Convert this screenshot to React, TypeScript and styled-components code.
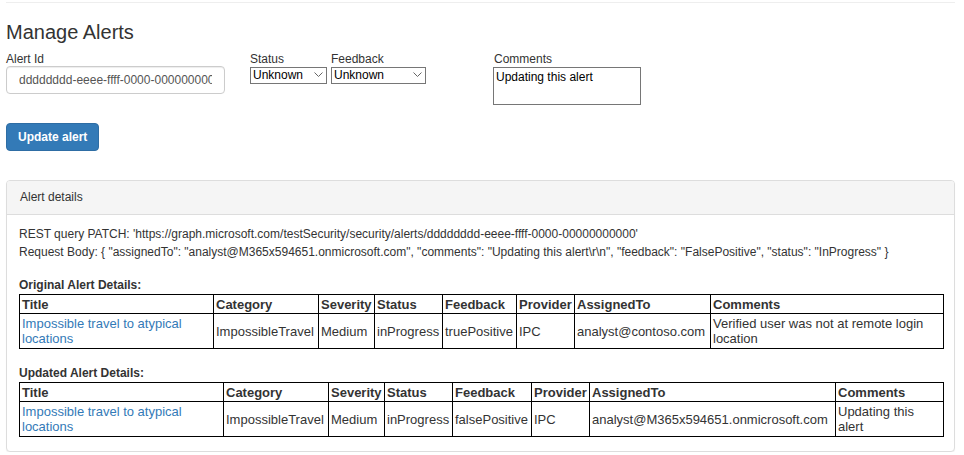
import React from "react";
import styled, { createGlobalStyle } from "styled-components";

const Global = createGlobalStyle`
  html, body { margin: 0; padding: 0; background: #fff; }
  body { font-family: "Liberation Sans", Arial, sans-serif; font-size: 12px; color: #333; line-height: 1.42857; }
  * { box-sizing: border-box; }
`;

const Page = styled.div`
  margin-left: 6px;
  width: 949px;
`;

const Rule = styled.hr`
  margin: 2px 0 0 0;
  border: 0;
  border-top: 1px solid #eee;
  height: 0;
`;

const Title = styled.h2`
  margin: 17px 0 0 0;
  font-size: 20px;
  font-weight: 400;
  line-height: 24px;
  color: #333;
`;

const FormRow = styled.div`
  display: flex;
  align-items: flex-start;
  margin-top: 8px;
`;

const Field = styled.div<{ $w: number; $ml?: number }>`
  display: flex;
  flex-direction: column;
  width: ${(p) => p.$w}px;
  margin-left: ${(p) => p.$ml ?? 0}px;
`;

const Label = styled.label`
  font-size: 12px;
  line-height: 14px;
  color: #333;
  height: 14px;
`;

const TextInput = styled.input`
  width: 219px;
  height: 28px;
  padding: 0 12px;
  border: 1px solid #ccc;
  border-radius: 4px;
  font-family: "Liberation Sans", Arial, sans-serif;
  font-size: 12px;
  color: #555;
  box-shadow: inset 0 1px 1px rgba(0, 0, 0, 0.075);
  outline: none;
`;

const SelectWrap = styled.div<{ $w: number }>`
  position: relative;
  width: ${(p) => p.$w}px;
  height: 17px;
  margin-top: 1px;
`;

const Select = styled.select`
  appearance: none;
  -webkit-appearance: none;
  width: 100%;
  height: 17px;
  border: 1px solid #767676;
  border-radius: 0;
  background: #fff;
  padding: 0 0 0 2px;
  font-family: "Liberation Sans", Arial, sans-serif;
  font-size: 12px;
  line-height: 15px;
  color: #000;
  outline: none;
`;

const Chevron = styled.svg`
  position: absolute;
  right: 4px;
  top: 5px;
  pointer-events: none;
`;

const TextArea = styled.textarea`
  width: 148px;
  height: 38px;
  margin-top: 1px;
  border: 1px solid #767676;
  border-radius: 0;
  padding: 2px 2px;
  margin-left: -1px;
  font-family: "Liberation Sans", Arial, sans-serif;
  font-size: 12px;
  line-height: 14px;
  color: #000;
  resize: none;
  outline: none;
`;

const Button = styled.button`
  margin-top: 18px;
  height: 28px;
  padding: 0 11px;
  background: #337ab7;
  border: 1px solid #2e6da4;
  border-radius: 4px;
  color: #fff;
  font-family: "Liberation Sans", Arial, sans-serif;
  font-size: 12px;
  font-weight: 700;
  cursor: pointer;
`;

const Panel = styled.div`
  margin-top: 29px;
  border: 1px solid #ddd;
  border-radius: 4px;
  box-shadow: 0 1px 1px rgba(0, 0, 0, 0.05);
  background: #fff;
`;

const PanelHeading = styled.div`
  height: 34px;
  padding: 0 13px;
  background: #f5f5f5;
  border-bottom: 1px solid #ddd;
  border-radius: 3px 3px 0 0;
  display: flex;
  align-items: center;
  font-size: 12px;
  color: #333;
`;

const PanelBody = styled.div`
  padding: 10px 11px 14px 12px;
`;

const Line = styled.div`
  line-height: 18px;
  font-size: 12px;
  white-space: nowrap;
`;

const Spacer = styled.div`
  height: 16px;
`;

const SectionLabel = styled.div`
  font-weight: 700;
  font-size: 12px;
  line-height: 17px;
`;

const Table = styled.table`
  width: 924px;
  table-layout: fixed;
  border-collapse: collapse;
  font-family: "Liberation Sans", Arial, sans-serif;
  font-size: 13px;
  line-height: 15px;
  color: #333;
`;

const Th = styled.th`
  border: 1px solid #000;
  padding: 2px 2px 1px 2px;
  text-align: left;
  font-weight: 700;
  white-space: nowrap;
  overflow: hidden;
`;

const Td = styled.td`
  border: 1px solid #000;
  padding: 2px 2px;
  vertical-align: middle;
`;

const Link = styled.a`
  color: #337ab7;
  text-decoration: none;
`;

const headers = ["Title", "Category", "Severity", "Status", "Feedback", "Provider", "AssignedTo", "Comments"];

type Row = {
  title: string;
  category: string;
  severity: string;
  status: string;
  feedback: string;
  provider: string;
  assigned: string;
  comments: string;
};

function AlertTable({ widths, row }: { widths: number[]; row: Row }) {
  return (
    <Table>
      <colgroup>
        {widths.map((w, i) => (
          <col key={i} style={{ width: w }} />
        ))}
      </colgroup>
      <thead>
        <tr>
          {headers.map((h) => (
            <Th key={h}>{h}</Th>
          ))}
        </tr>
      </thead>
      <tbody>
        <tr>
          <Td>
            <Link href="#">{row.title}</Link>
          </Td>
          <Td>{row.category}</Td>
          <Td>{row.severity}</Td>
          <Td>{row.status}</Td>
          <Td>{row.feedback}</Td>
          <Td>{row.provider}</Td>
          <Td>{row.assigned}</Td>
          <Td>{row.comments}</Td>
        </tr>
      </tbody>
    </Table>
  );
}

function Dropdown({ w }: { w: number }) {
  return (
    <SelectWrap $w={w}>
      <Select defaultValue="Unknown">
        <option>Unknown</option>
        <option>True Positive</option>
        <option>False Positive</option>
      </Select>
      <Chevron width="9" height="6" viewBox="0 0 9 6">
        <polyline points="0.5,0.5 4.5,4.5 8.5,0.5" fill="none" stroke="#666" strokeWidth="1" />
      </Chevron>
    </SelectWrap>
  );
}

export default function App() {
  return (
    <>
      <Global />
      <Page>
        <Rule />
        <Title>Manage Alerts</Title>
        <FormRow>
          <Field $w={219}>
            <Label>Alert Id</Label>
            <TextInput defaultValue="dddddddd-eeee-ffff-0000-000000000000" />
          </Field>
          <Field $w={77} $ml={25}>
            <Label>Status</Label>
            <Dropdown w={77} />
          </Field>
          <Field $w={95} $ml={4}>
            <Label>Feedback</Label>
            <Dropdown w={95} />
          </Field>
          <Field $w={148} $ml={68}>
            <Label>Comments</Label>
            <TextArea defaultValue="Updating this alert" />
          </Field>
        </FormRow>
        <Button>Update alert</Button>
        <Panel>
          <PanelHeading>Alert details</PanelHeading>
          <PanelBody>
            <Line>REST query PATCH: 'https://graph.microsoft.com/testSecurity/security/alerts/dddddddd-eeee-ffff-0000-00000000000'</Line>
            <Line>
              Request Body: {"{"} "assignedTo": "analyst@M365x594651.onmicrosoft.com", "comments": "Updating this alert\r\n", "feedback": "FalsePositive", "status": "InProgress" {"}"}
            </Line>
            <Spacer />
            <SectionLabel>Original Alert Details:</SectionLabel>
            <AlertTable
              widths={[194, 105, 56, 68, 74, 58, 136, 233]}
              row={{
                title: "Impossible travel to atypical locations",
                category: "ImpossibleTravel",
                severity: "Medium",
                status: "inProgress",
                feedback: "truePositive",
                provider: "IPC",
                assigned: "analyst@contoso.com",
                comments: "Verified user was not at remote login location",
              }}
            />
            <Spacer />
            <SectionLabel>Updated Alert Details:</SectionLabel>
            <AlertTable
              widths={[204, 105, 56, 68, 79, 58, 246, 108]}
              row={{
                title: "Impossible travel to atypical locations",
                category: "ImpossibleTravel",
                severity: "Medium",
                status: "inProgress",
                feedback: "falsePositive",
                provider: "IPC",
                assigned: "analyst@M365x594651.onmicrosoft.com",
                comments: "Updating this alert",
              }}
            />
          </PanelBody>
        </Panel>
      </Page>
    </>
  );
}
